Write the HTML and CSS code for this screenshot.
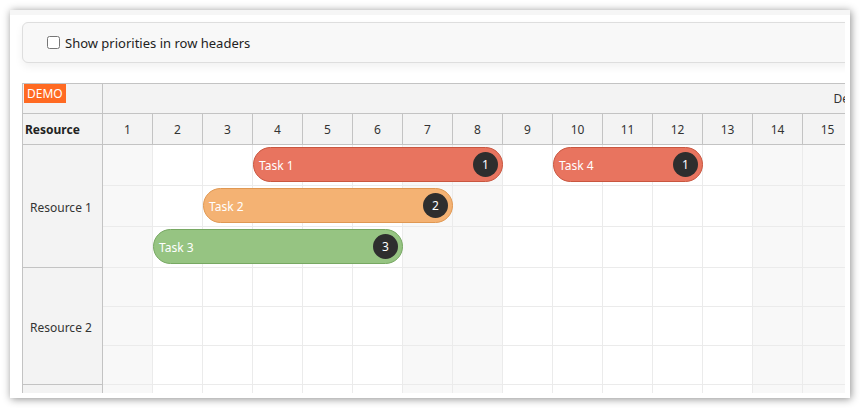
FILE: index.html
```html
<!DOCTYPE html>
<html lang="en">
<head>
  <meta charset="UTF-8" />
  <title>Scheduler - Event Priorities</title>
  <link rel="stylesheet" href="styles.css">
</head>
<body>
  <div class="frame">
    <div class="page">
      <div class="toolbar">
        <label><input type="checkbox" id="showPriorities"> Show priorities in row headers</label>
      </div>

      <div class="scheduler">
        <div class="corner">
          <div class="corner-top"><span class="demo">DEMO</span></div>
          <div class="corner-bottom">Resource</div>
        </div>

        <div class="timeheader">
          <div class="month"><span>December 2024</span></div>
          <div class="days">
            <div class="day">1</div>
            <div class="day">2</div>
            <div class="day">3</div>
            <div class="day">4</div>
            <div class="day">5</div>
            <div class="day">6</div>
            <div class="day">7</div>
            <div class="day">8</div>
            <div class="day">9</div>
            <div class="day">10</div>
            <div class="day">11</div>
            <div class="day">12</div>
            <div class="day">13</div>
            <div class="day">14</div>
            <div class="day">15</div>
            <div class="day">16</div>
          </div>
        </div>

        <div class="rowheaders">
          <div class="res res-1">Resource 1</div>
          <div class="res res-2">Resource 2</div>
          <div class="res res-3">Resource 3</div>
        </div>

        <div class="cells">
          <!-- day columns (weekends shaded) -->
          <div class="columns">
            <div class="col weekend"></div>
            <div class="col"></div>
            <div class="col"></div>
            <div class="col"></div>
            <div class="col"></div>
            <div class="col"></div>
            <div class="col weekend"></div>
            <div class="col weekend"></div>
            <div class="col"></div>
            <div class="col"></div>
            <div class="col"></div>
            <div class="col"></div>
            <div class="col"></div>
            <div class="col weekend"></div>
            <div class="col weekend"></div>
            <div class="col"></div>
          </div>

          <div class="lanes">
            <div class="lane lane-1"></div>
            <div class="lane lane-1"></div>
            <div class="lane lane-1"></div>
            <div class="lane lane-2"></div>
            <div class="lane lane-2"></div>
            <div class="lane lane-2"></div>
            <div class="lane lane-2"></div>
            <div class="lane lane-2"></div>
            <div class="lane lane-2"></div>
          </div>

          <div class="event red" style="top: 2px; left: 150px; width: 250px;">
            <span>Task 1</span><span class="badge">1</span>
          </div>
          <div class="event red" style="top: 2px; left: 450px; width: 150px;">
            <span>Task 4</span><span class="badge">1</span>
          </div>
          <div class="event orange" style="top: 43px; left: 100px; width: 250px;">
            <span>Task 2</span><span class="badge">2</span>
          </div>
          <div class="event green" style="top: 84px; left: 50px; width: 250px;">
            <span>Task 3</span><span class="badge">3</span>
          </div>
        </div>
      </div>
    </div>
  </div>
</body>
</html>
```

FILE: styles.css
```css
* {
  box-sizing: border-box;
}
body {
  margin: 0;
  background: #fff;
  font-family: "Noto Sans", "Open Sans", sans-serif;
  color: #333;
}
.frame {
  margin: 10px;
  width: 840px;
  height: 388px;
  background: #fff;
  border-top: 5px solid #f6f6f6;
  padding: 0 5px 5px 0;
  box-shadow: 1px 1px 8px rgba(0, 0, 0, 0.45);
}
.page {
  height: 100%;
  overflow: hidden;
  padding: 7px 0 0 12px;
}
.toolbar {
  width: 900px;
  height: 41px;
  display: flex;
  align-items: center;
  padding-left: 20px;
  background: #f8f8f8;
  border: 1px solid #dedede;
  border-radius: 6px;
  box-shadow: 0 4px 8px rgba(0, 0, 0, 0.06);
  font-size: 13px;
  color: #222;
}
.toolbar label {
  display: flex;
  align-items: center;
}
.toolbar input {
  margin: 0 5px 0 4px;
  width: 13px;
  height: 13px;
}
.scheduler {
  margin-top: 20px;
  display: grid;
  grid-template-columns: 80px 1600px;
  border-left: 1px solid #c3c3c3;
  border-top: 1px solid #c3c3c3;
  font-size: 12px;
}
.corner {
  background: #f3f3f3;
  border-right: 1px solid #c3c3c3;
}
.corner-top {
  height: 30px;
  border-bottom: 1px solid #c3c3c3;
}
.demo {
  display: inline-block;
  margin-left: 1px;
  height: 19px;
  line-height: 19px;
  padding: 0 3px;
  background: #ff6a22;
  color: #fff;
  font-size: 12px;
}
.corner-bottom {
  height: 31px;
  display: flex;
  align-items: center;
  padding-left: 2px;
  font-weight: bold;
  color: #222;
  border-bottom: 1px solid #c3c3c3;
}
.timeheader {
  background: #f3f3f3;
}
.month {
  width: 1550px;
  height: 30px;
  display: flex;
  align-items: center;
  justify-content: center;
  border-bottom: 1px solid #c3c3c3;
}
.days {
  display: flex;
}
.day {
  width: 50px;
  height: 31px;
  display: flex;
  align-items: center;
  justify-content: center;
  border-right: 1px solid #c3c3c3;
  border-bottom: 1px solid #c3c3c3;
}
.rowheaders {
  background: #f3f3f3;
  border-right: 1px solid #c3c3c3;
}
.res {
  display: flex;
  align-items: center;
  padding: 2px 0 0 7px;
  border-bottom: 1px solid #c3c3c3;
}
.res-1 {
  height: 123px;
}
.res-2,
.res-3 {
  height: 117px;
}
.cells {
  position: relative;
}
.columns {
  position: absolute;
  top: 0;
  left: 0;
  bottom: 0;
  display: flex;
}
.col {
  width: 50px;
  border-right: 1px solid #ebebeb;
}
.col.weekend {
  background: #f8f8f8;
}
.lanes {
  position: relative;
}
.lane {
  border-bottom: 1px solid #ebebeb;
}
.lane-1 {
  height: 41px;
}
.lane-2 {
  height: 39px;
}
.event {
  position: absolute;
  height: 35px;
  display: flex;
  align-items: center;
  justify-content: space-between;
  padding: 1px 4px 0 5px;
  border: 1px solid;
  border-radius: 18px;
  color: #fff;
  font-size: 12px;
}
.event.red {
  background: #e8745f;
  border-color: #c9563f;
}
.event.orange {
  background: #f4b273;
  border-color: #e09852;
}
.event.green {
  background: #96c482;
  border-color: #77a862;
}
.badge {
  width: 25px;
  height: 25px;
  margin-top: -1px;
  border-radius: 50%;
  background: #2e2e2e;
  display: flex;
  align-items: center;
  justify-content: center;
  font-size: 12px;
}
```
